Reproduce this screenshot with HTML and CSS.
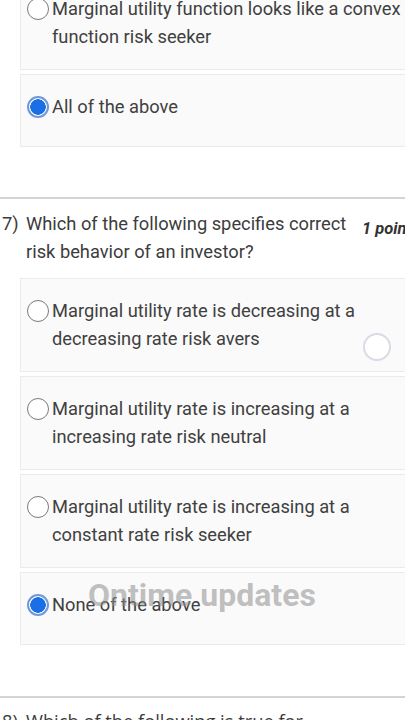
FILE: index.html
```html
<!DOCTYPE html>
<html>
<head>
<meta charset="utf-8">
<link rel="stylesheet" href="styles.css">
</head>
<body>
<div class="page">
  <div class="options first">
    <div class="option tall">
      <span class="radio"></span>
      <span class="label">Marginal utility function looks like a convex function risk seeker</span>
    </div>
    <div class="option">
      <span class="radio checked"></span>
      <span class="label">All of the above</span>
    </div>
  </div>

  <div class="question">
    <div class="q-head">
      <span class="q-num">7)</span>
      <span class="q-text">Which of the following specifies correct risk behavior of an investor?</span>
      <span class="points">1 point</span>
    </div>
    <div class="options">
      <div class="option tall">
        <span class="radio"></span>
        <span class="label">Marginal utility rate is decreasing at a decreasing rate risk avers</span>
        <span class="ghost-radio"></span>
      </div>
      <div class="option tall">
        <span class="radio"></span>
        <span class="label">Marginal utility rate is increasing at a increasing rate risk neutral</span>
      </div>
      <div class="option tall">
        <span class="radio"></span>
        <span class="label">Marginal utility rate is increasing at a constant rate risk seeker</span>
      </div>
      <div class="option">
        <span class="radio checked"></span>
        <span class="label">None of the above</span>
        <span class="watermark">Ontime updates</span>
      </div>
    </div>
  </div>

  <div class="question next">
    <div class="q-head">
      <span class="q-num">8)</span>
      <span class="q-text">Which of the following is true for</span>
    </div>
  </div>
</div>
</body>
</html>
```
FILE: styles.css
```css
html, body {
  margin: 0;
  padding: 0;
  background: #ffffff;
}
body {
  font-family: Roboto, "Liberation Sans", Arial, sans-serif;
  color: #3c3c3c;
  overflow: hidden;
  width: 405px;
  height: 720px;
}
.page {
  width: 405px;
}
.options {
  display: flex;
  flex-direction: column;
  gap: 4px;
  margin-left: 20px;
  width: 400px;
}
.options.first {
  margin-top: -24px;
}
.option {
  position: relative;
  box-sizing: border-box;
  min-height: 73px;
  padding: 18px 10px 18px 6px;
  background: #fafafa;
  border: 1px solid #ebebeb;
  display: flex;
  align-items: flex-start;
  gap: 3px;
}
.option.tall {
  min-height: 94px;
}
.radio {
  flex: none;
  box-sizing: border-box;
  width: 22px;
  height: 22px;
  margin-top: 3px;
  border-radius: 50%;
  border: 1.6px solid #7a7a7a;
  background: #fff;
}
.radio.checked {
  border: 2px solid #6f98d6;
  background: radial-gradient(circle, #1a6fe6 0 7.5px, #ffffff 8px);
}
.label {
  width: 362px;
  font-size: 18.3px;
  line-height: 28px;
  color: #404040;
}
.question {
  border-top: 2px solid #d4d4d4;
  margin-top: 50px;
  padding-top: 11px;
}
.q-head {
  display: flex;
  align-items: flex-start;
  padding-left: 2px;
  margin-bottom: 12px;
}
.q-num {
  flex: none;
  width: 24px;
  font-size: 18.3px;
  line-height: 28px;
}
.q-text {
  flex: none;
  width: 332px;
  font-size: 18.3px;
  line-height: 28px;
}
.points {
  flex: none;
  white-space: nowrap;
  font-size: 16.5px;
  font-weight: bold;
  font-style: italic;
  line-height: 28px;
  margin-top: 5px;
  margin-left: 4px;
  color: #333;
}
.question.next {
  margin-top: 51px;
  padding-top: 9px;
}
.question.next .q-num,
.question.next .q-text {
  font-family: "Open Sans", Roboto, sans-serif;
}
.ghost-radio {
  position: absolute;
  left: 342px;
  top: 54px;
  width: 24px;
  height: 24px;
  border-radius: 50%;
  border: 2px solid #dcdbe3;
  background: #fff;
}
.watermark {
  position: absolute;
  left: 67px;
  top: 3px;
  font-family: Roboto, "Liberation Sans", sans-serif;
  font-weight: bold;
  font-size: 32px;
  line-height: 38px;
  color: rgba(140, 140, 140, 0.55);
  white-space: nowrap;
}
```
